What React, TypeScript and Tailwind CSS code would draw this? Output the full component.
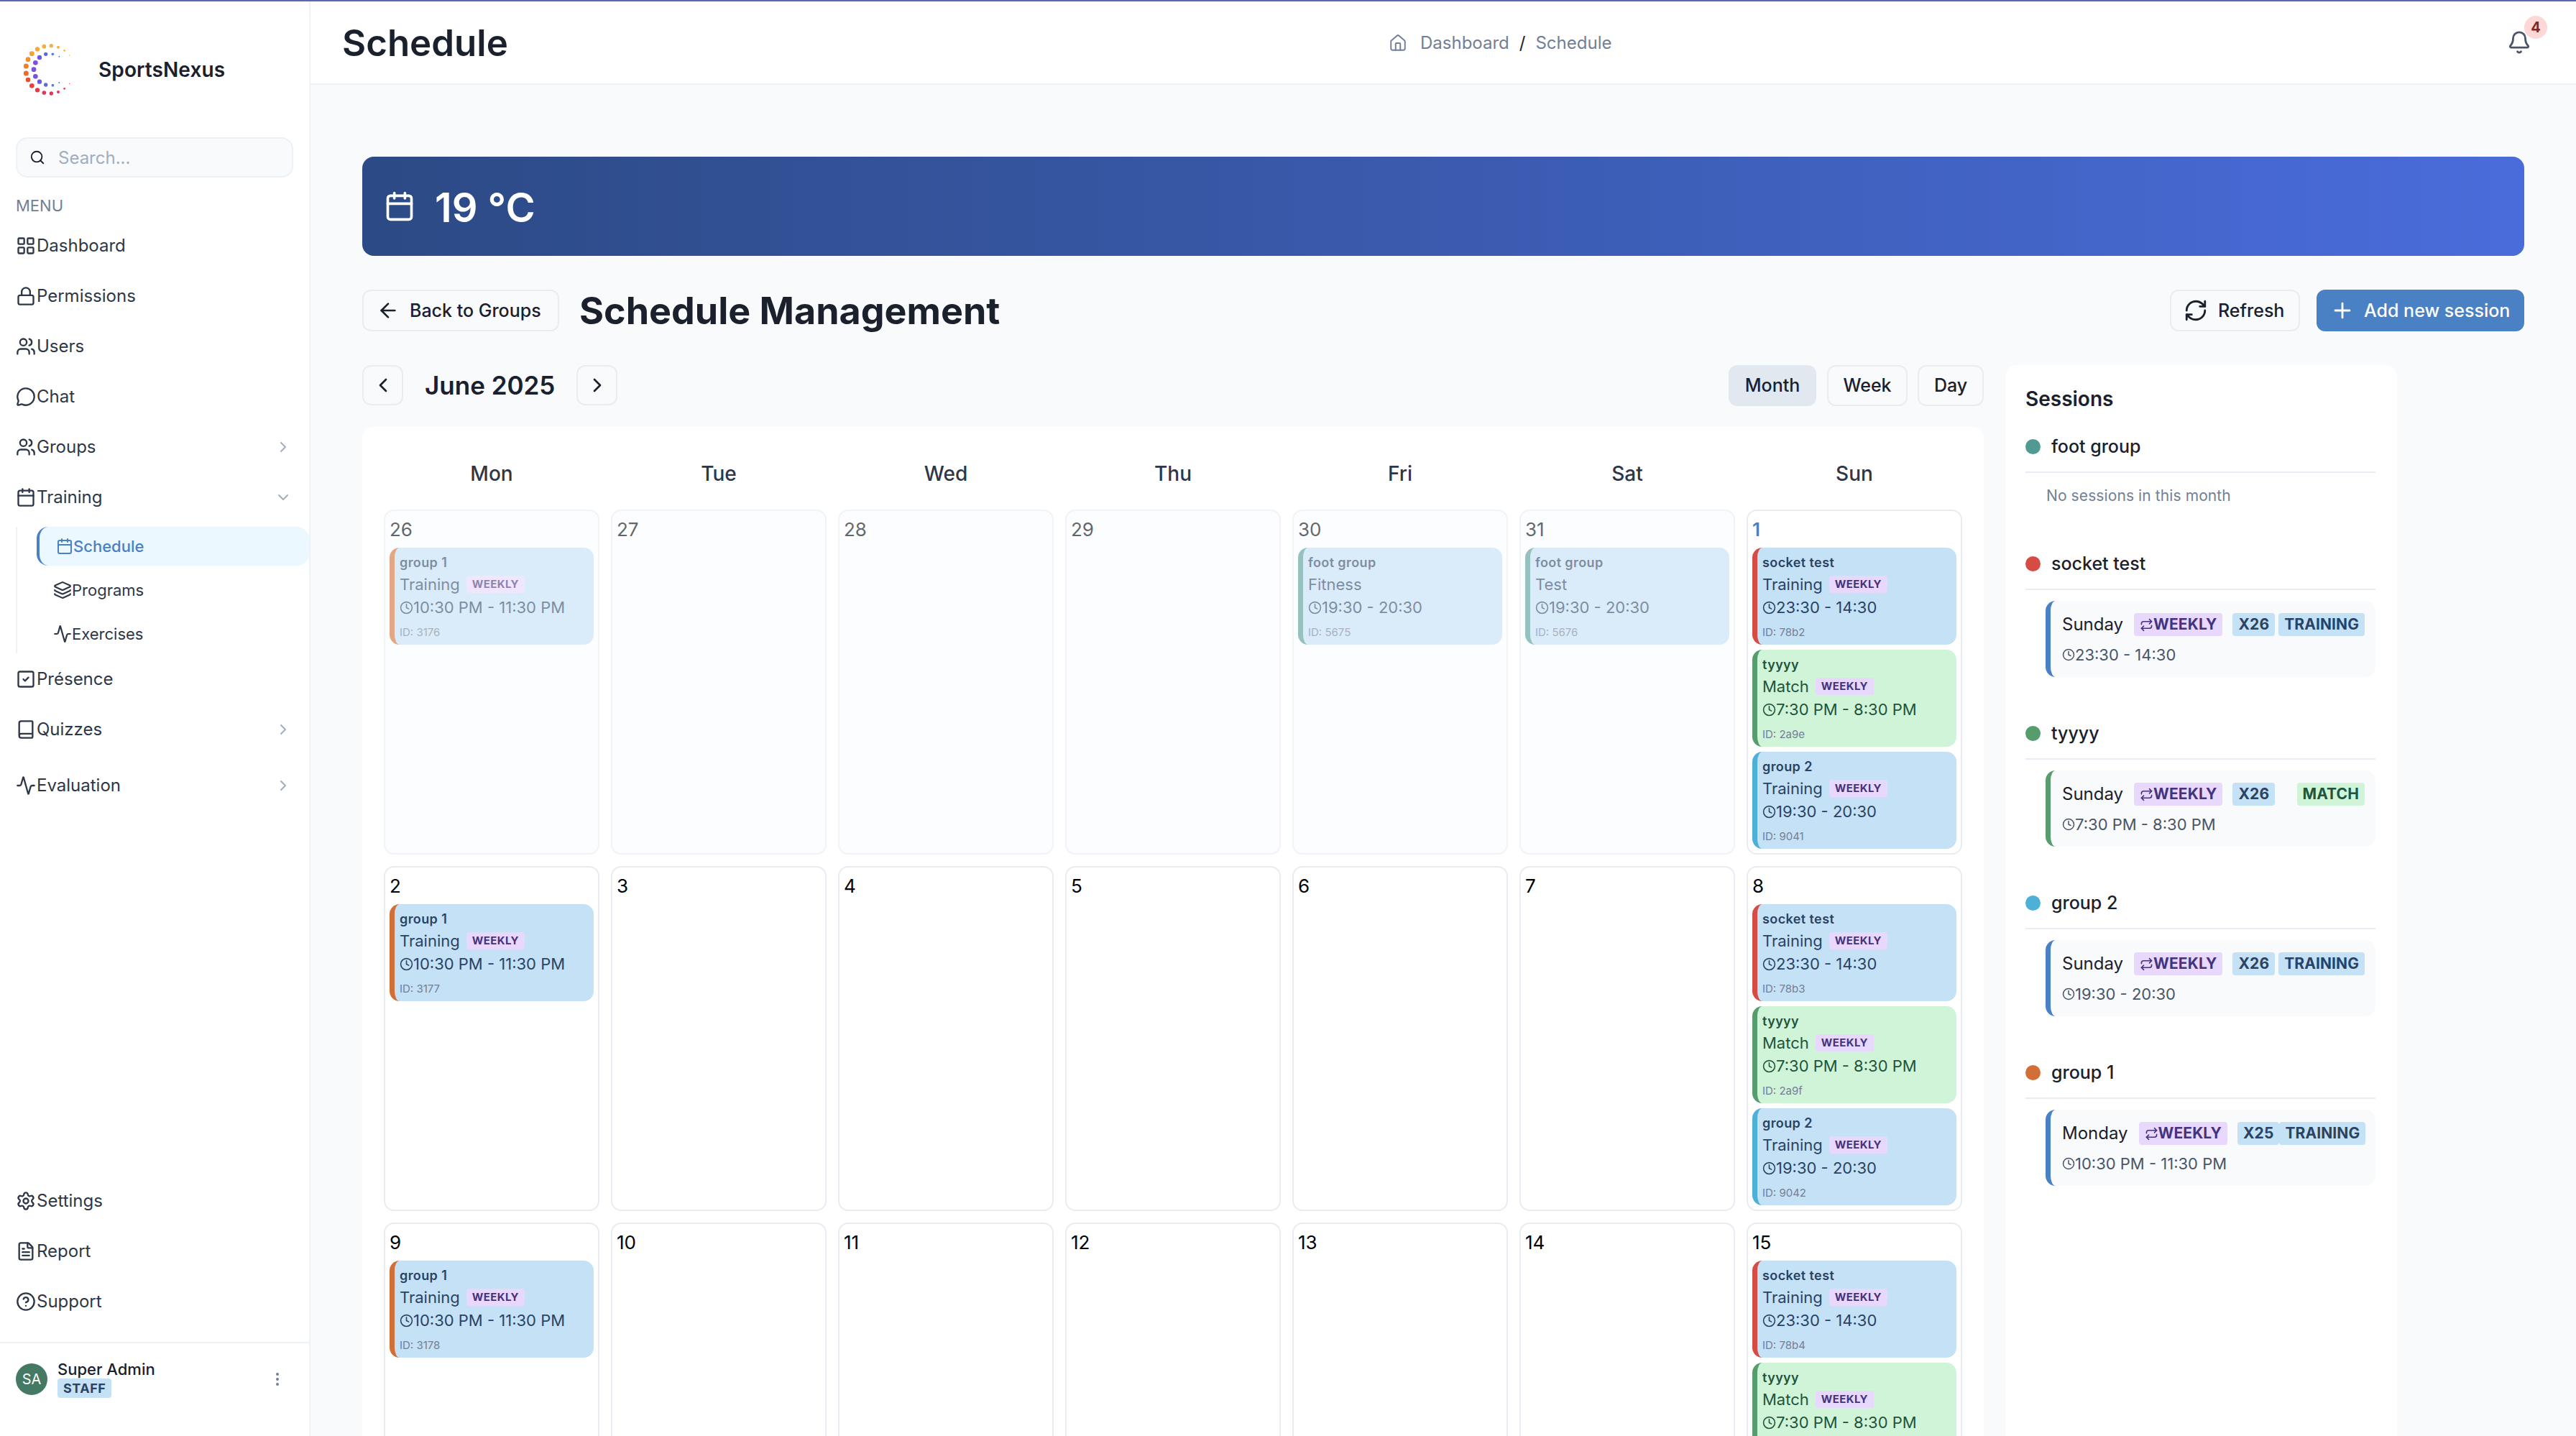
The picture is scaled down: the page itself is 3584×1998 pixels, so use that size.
import React from "react";
import {
  LayoutGrid, Lock, Users, MessageCircle, ChevronRight, ChevronDown, ChevronLeft, Calendar, Layers, Activity,
  SquareCheck, Book, Settings, FileText, CircleHelp, Search, MoreVertical, Home, Bell, ArrowLeft, RefreshCw, Plus, Clock, Repeat,
} from "lucide-react";

const outer: [number, number, number, string][] = [
  [287, 212, 2, "#f6b13a"], [266, 192, 4, "#f6b13a"], [240, 178, 6, "#f6b13a"], [211, 172, 8, "#f6b13a"], [181, 175, 8.5, "#f6ae3a"],
  [153, 186, 9.5, "#f5a838"], [130, 205, 10, "#f3a035"], [114, 229, 10, "#f19031"], [106, 257, 10.5, "#ee7f2d"], [106, 287, 10.5, "#ec6a2c"],
  [114, 314, 10, "#ea502f"], [130, 339, 10, "#e94237"], [153, 357, 9.5, "#e83a45"], [181, 368, 8.5, "#e8345a"], [211, 371, 8, "#e8315a"],
  [240, 365, 6, "#e8315a"], [266, 351, 4, "#e8315a"], [287, 330, 2, "#e8315a"],
];
const inner: [number, number, number, string][] = [
  [244, 217, 3, "#4a7fe8"], [217, 207, 5.5, "#4f7aea"], [188, 207, 8, "#5a68e6"], [162, 221, 9.5, "#6a58e4"], [145, 243, 10, "#7a4fe2"],
  [138, 271, 10, "#7c4fe0"], [145, 300, 10, "#7a4fe2"], [162, 322, 9.5, "#6a58e4"], [188, 335, 8, "#5a68e6"], [217, 337, 5.5, "#4f7aea"], [244, 326, 3, "#4a7fe8"],
];

function Logo() {
  return (
    <svg width="100" height="100" viewBox="0 0 300 300" className="shrink-0">
      {[...outer, ...inner].map(([x, y, r, c], i) => (
        <circle key={i} cx={x - 45} cy={y - 122} r={r} fill={c} />
      ))}
    </svg>
  );
}

function NavItem({ icon: Icon, label, chevron }: { icon: any; label: string; chevron?: "r" | "d" }) {
  return (
    <div className="flex h-[40px] items-center pl-[22px] pr-[24px] text-[24px] text-[#2d3748]">
      <Icon size={28} strokeWidth={2} className="shrink-0" />
      <span className="ml-[1px]">{label}</span>
      {chevron === "r" && <ChevronRight size={24} className="ml-auto text-[#a0aec0]" />}
      {chevron === "d" && <ChevronDown size={24} className="ml-auto text-[#a0aec0]" />}
    </div>
  );
}

function Sidebar() {
  return (
    <aside className="flex h-full w-[432px] shrink-0 flex-col border-r-2 border-[#edf2f7] bg-white">
      <div className="flex h-[135px] items-center pl-[16px] pt-[55px]">
        <Logo />
        <span className="ml-[21px] text-[28px] font-semibold tracking-[0.1px] text-[#1a202c]">SportsNexus</span>
      </div>
      <div className="mx-[22px] mt-[54px] flex h-[56px] items-center rounded-[16px] border-2 border-[#edf2f7] bg-[#f8fafc] pl-[17px]">
        <Search size={22} strokeWidth={2} className="text-[#1a202c]" />
        <span className="ml-[18px] pt-[2px] text-[24px] text-[#a0aec0]">Search...</span>
      </div>
      <div className="ml-[22px] mt-[24px] text-[22px] leading-[30px] text-[#718096]">MENU</div>
      <div className="mt-[21px] flex flex-col">
        <div className="flex flex-col gap-[30px]">
          <NavItem icon={LayoutGrid} label="Dashboard" />
          <NavItem icon={Lock} label="Permissions" />
          <NavItem icon={Users} label="Users" />
          <NavItem icon={MessageCircle} label="Chat" />
          <NavItem icon={Users} label="Groups" chevron="r" />
          <NavItem icon={Calendar} label="Training" chevron="d" />
        </div>
        <div className="ml-[22px] mt-[21px] flex flex-col border-l-2 border-[#edf2f7] pl-[27px]">
          <div className="flex h-[54px] items-center rounded-[16px] border-l-4 border-[#4a80c4] bg-[#ebf8ff] pl-[23px] text-[22px] font-medium text-[#4a80c4]">
            <Calendar size={24} className="shrink-0" />
            <span>Schedule</span>
          </div>
          <div className="mt-[7px] flex h-[54px] items-center pl-[23px] text-[22px] text-[#2d3748]">
            <Layers size={26} className="shrink-0" />
            <span>Programs</span>
          </div>
          <div className="mt-[7px] flex h-[54px] items-center pl-[23px] text-[22px] text-[#2d3748]">
            <Activity size={26} className="shrink-0" />
            <span>Exercises</span>
          </div>
        </div>
        <div className="mt-[16px] flex flex-col">
          <NavItem icon={SquareCheck} label="Présence" />
          <div className="mt-[30px]"><NavItem icon={Book} label="Quizzes" chevron="r" /></div>
          <div className="mt-[38px]"><NavItem icon={Activity} label="Evaluation" chevron="r" /></div>
        </div>
      </div>
      <div className="mt-auto flex flex-col gap-[30px] pb-[36px]">
        <NavItem icon={Settings} label="Settings" />
        <NavItem icon={FileText} label="Report" />
        <NavItem icon={CircleHelp} label="Support" />
      </div>
      <div className="flex h-[131px] items-center border-t-2 border-[#edf2f7] pb-[30px] pl-[22px] pr-[32px]">
        <div className="flex h-[44px] w-[44px] items-center justify-center rounded-full bg-[#447a64] text-[20px] text-white">SA</div>
        <div className="ml-[14px] flex flex-col items-start">
          <span className="text-[22px] font-medium leading-[26px] text-[#1a202c]">Super Admin</span>
          <span className="rounded-[4px] bg-[#c5e1f6] px-[8px] text-[18px] font-bold leading-[27px] tracking-[0.5px] text-[#2a4365]">STAFF</span>
        </div>
        <MoreVertical size={24} className="ml-auto text-[#718096]" />
      </div>
    </aside>
  );
}

function Header() {
  return (
    <header className="relative flex h-[116px] shrink-0 items-center border-b-2 border-[#edf2f7] bg-white pl-[44px]">
      <h1 className="w-[1456px] pt-[2px] text-[51px] font-semibold text-[#1a202c]">Schedule</h1>
      <div className="flex items-center pt-[2px] text-[24px] text-[#718096]">
        <Home size={26} strokeWidth={1.8} />
        <span className="ml-[18px]">Dashboard</span>
        <span className="mx-[14px] text-[#1a202c]">/</span>
        <span>Schedule</span>
      </div>
      <div className="absolute left-[3056px] top-[40px]">
        <Bell size={34} strokeWidth={2} className="text-[#4a5568]" />
        <span className="absolute left-[24px] top-[-20px] flex h-[32px] w-[32px] items-center justify-center rounded-full bg-[#fed7d7] text-[20px] font-bold text-[#822727]">4</span>
      </div>
    </header>
  );
}

type Ev = { g: string; t: string; time: string; id: string; c: string; match?: boolean; noBadge?: boolean };

function Event({ e }: { e: Ev }) {
  const fg = e.match ? "text-[#22543d]" : "text-[#2a4365]";
  const bg = e.match ? "bg-[#cff4d8]" : "bg-[#c5e1f6]";
  return (
    <div className={`flex h-[135px] flex-col rounded-[14px] border-l-[7px] pl-[7px] ${bg} ${fg} ${e.c}`}>
      <div className="mt-[9px] text-[18px] font-semibold leading-[24px] tracking-[0.4px]">{e.g}</div>
      <div className="mt-[6px] flex h-[24px] items-center text-[22px]">
        <span>{e.t}</span>
        {!e.noBadge && (
          <span className="ml-[9px] rounded-[4px] bg-[#e9d8fd] px-[8px] text-[15px] font-bold leading-[24px] tracking-[0.4px] text-[#44337a]">WEEKLY</span>
        )}
      </div>
      <div className="mt-[4px] flex h-[32px] items-center text-[22px]">
        <Clock size={19} strokeWidth={2} className="shrink-0" />
        <span>{e.time}</span>
      </div>
      <div className="mt-[7px] text-[15px] leading-[24px] text-[#718096]">ID: {e.id}</div>
    </div>
  );
}

function Cell({ d, muted, today, events = [] }: { d: number; muted?: boolean; today?: boolean; events?: Ev[] }) {
  return (
    <div className={`h-[480px] overflow-hidden rounded-[14px] border-2 ${muted ? "border-[#f0f3f7] bg-[#fcfdfe]" : "border-[#e9edf3] bg-white"}`}>
      <div className={muted ? "opacity-60" : ""}>
        <div className={`pl-[6px] pt-[10px] text-[26px] leading-[32px] ${today ? "font-semibold text-[#4a80c4]" : "text-black"}`}>{d}</div>
        <div className="mt-[9px] flex flex-col gap-[7px] px-[6px]">
          {events.map((e) => <Event key={e.id} e={e} />)}
        </div>
      </div>
    </div>
  );
}

const g1 = (id: string, c = "border-[#d26f36]"): Ev => ({ g: "group 1", t: "Training", time: "10:30 PM - 11:30 PM", id, c });
const sock = (id: string): Ev => ({ g: "socket test", t: "Training", time: "23:30 - 14:30", id, c: "border-[#d64c45]" });
const ty = (id: string): Ev => ({ g: "tyyyy", t: "Match", time: "7:30 PM - 8:30 PM", id, c: "border-[#569c6c]", match: true });
const g2 = (id: string): Ev => ({ g: "group 2", t: "Training", time: "19:30 - 20:30", id, c: "border-[#4db0d6]" });
const foot = (t: string, id: string): Ev => ({ g: "foot group", t, time: "19:30 - 20:30", id, c: "border-[#519a94]", noBadge: true });

function Tag({ cls, children }: { cls: string; children: React.ReactNode }) {
  return <span className={`flex h-[32px] items-center rounded-[4px] px-[8px] text-[21px] font-bold tracking-[0.1px] ${cls}`}>{children}</span>;
}

function SessionGroup({ name, dot, children }: { name: string; dot: string; children?: React.ReactNode }) {
  return (
    <div>
      <div className="flex h-[53px] items-start gap-[15px] border-b-2 border-[#e9edf3]">
        <span className={`mt-[6px] h-[21px] w-[21px] rounded-full ${dot}`} />
        <span className="text-[25px] font-medium leading-[32px] text-[#1a202c]">{name}</span>
      </div>
      {children}
    </div>
  );
}

function SessionCard({ day, x, type, time, c, match }: { day: string; x: string; type: string; time: string; c: string; match?: boolean }) {
  return (
    <div className={`ml-[28px] mt-[15px] flex h-[106px] flex-col rounded-[14px] border-l-[7px] bg-[#f8fafc] pl-[16px] pr-[15px] ${c}`}>
      <div className="mt-[17px] flex h-[32px] items-center">
        <span className="mr-[15px] text-[24px] text-[#1a202c]">{day}</span>
        <Tag cls="bg-[#e9d8fd] text-[#44337a]"><Repeat size={19} strokeWidth={2} />WEEKLY</Tag>
        <Tag cls="ml-[14px] bg-[#c5e1f6] text-[#2a4365]">{x}</Tag>
        <Tag cls={`ml-auto ${match ? "bg-[#cff4d8] text-[#22543d]" : "bg-[#c5e1f6] text-[#2a4365]"}`}>{type}</Tag>
      </div>
      <div className="mt-[10px] flex items-center text-[22px] leading-[32px] text-[#4a5568]">
        <Clock size={18} className="shrink-0" />
        <span>{time}</span>
      </div>
    </div>
  );
}

export default function App() {
  const days = ["Mon", "Tue", "Wed", "Thu", "Fri", "Sat", "Sun"];
  return (
    <div className="h-screen w-full overflow-hidden border-t-2 border-[#5b67b5] bg-white font-['Inter',sans-serif]">
      <div className="flex h-full">
        <Sidebar />
        <main className="flex h-full min-w-0 flex-1 flex-col overflow-hidden bg-[#f8fafc]">
          <Header />
          <div className="flex flex-col pl-[72px] pr-[72px] pt-[100px]">
            <div className="flex h-[138px] items-center rounded-[16px] bg-gradient-to-r from-[#2c4a85] to-[#4a6cdb] pl-[30px] text-white">
              <Calendar size={44} strokeWidth={2} />
              <span className="ml-[27px] mt-[3px] text-[56px] font-semibold">19 °C</span>
            </div>
            <div className="mt-[47px] flex h-[58px] items-center">
              <button className="flex h-[58px] w-[274px] items-center rounded-[12px] border-2 border-[#e9edf3] pl-[18px] text-[25px] font-medium text-[#1a202c]">
                <ArrowLeft size={32} />
                <span className="ml-[14px] pt-[2px]">Back to Groups</span>
              </button>
              <h2 className="ml-[28px] pt-[1px] text-[52px] font-bold text-[#1a202c]">Schedule Management</h2>
              <button className="ml-auto flex h-[58px] w-[181px] items-center rounded-[12px] border-2 border-[#e9edf3] pl-[17px] text-[25px] font-medium text-[#1a202c]">
                <RefreshCw size={34} strokeWidth={2} />
                <span className="ml-[14px] pt-[2px]">Refresh</span>
              </button>
              <button className="ml-[23px] flex h-[58px] w-[289px] items-center rounded-[12px] bg-[#4a80c4] pl-[19px] text-[25px] font-medium text-white">
                <Plus size={34} strokeWidth={2} />
                <span className="ml-[13px] pt-[2px]">Add new session</span>
              </button>
            </div>
            <div className="mt-[47px] flex items-start gap-[30px]">
              <div className="w-[2256px] shrink-0">
                <div className="flex h-[56px] items-center">
                  <button className="flex h-[56px] w-[57px] items-center justify-center rounded-[12px] border-2 border-[#e9edf3] text-[#1a202c]"><ChevronLeft size={32} /></button>
                  <span className="mx-[30px] pt-[1px] text-[35px] font-semibold text-[#1a202c]">June 2025</span>
                  <button className="flex h-[56px] w-[57px] items-center justify-center rounded-[12px] border-2 border-[#e9edf3] text-[#1a202c]"><ChevronRight size={32} /></button>
                  <button className="ml-auto h-[57px] w-[122px] rounded-[12px] bg-[#e2e8f0] pt-[1px] text-[25px] font-medium text-[#1a202c]">Month</button>
                  <button className="ml-[15px] h-[57px] w-[112px] rounded-[12px] border-2 border-[#e9edf3] pt-[1px] text-[25px] font-medium text-[#1a202c]">Week</button>
                  <button className="ml-[14px] h-[57px] w-[92px] rounded-[12px] border-2 border-[#e9edf3] pt-[1px] text-[25px] font-medium text-[#1a202c]">Day</button>
                </div>
                <div className="mt-[30px] rounded-[16px] bg-white px-[30px]">
                  <div className="grid h-[115px] grid-cols-7 items-center gap-x-[16px] pt-[14px]">
                    {days.map((d) => <div key={d} className="text-center text-[28px] font-medium text-[#2d3748]">{d}</div>)}
                  </div>
                  <div className="grid grid-cols-7 gap-[16px]">
                    <Cell d={26} muted events={[g1("3176")]} />
                    <Cell d={27} muted />
                    <Cell d={28} muted />
                    <Cell d={29} muted />
                    <Cell d={30} muted events={[foot("Fitness", "5675")]} />
                    <Cell d={31} muted events={[foot("Test", "5676")]} />
                    <Cell d={1} today events={[sock("78b2"), ty("2a9e"), g2("9041")]} />
                    <Cell d={2} events={[g1("3177")]} />
                    <Cell d={3} />
                    <Cell d={4} />
                    <Cell d={5} />
                    <Cell d={6} />
                    <Cell d={7} />
                    <Cell d={8} events={[sock("78b3"), ty("2a9f"), g2("9042")]} />
                    <Cell d={9} events={[g1("3178")]} />
                    <Cell d={10} />
                    <Cell d={11} />
                    <Cell d={12} />
                    <Cell d={13} />
                    <Cell d={14} />
                    <Cell d={15} events={[sock("78b4"), ty("2a9g")]} />
                  </div>
                </div>
              </div>
              <div className="h-[1600px] w-[545px] shrink-0 rounded-[16px] bg-white pl-[28px] pr-[30px] pt-[30px]">
                <h3 className="text-[28px] font-semibold leading-[34px] text-[#1a202c]">Sessions</h3>
                <div className="mt-[33px]">
                  <SessionGroup name="foot group" dot="bg-[#519a94]">
                    <div className="ml-[29px] mt-[17px] text-[21px] leading-[30px] tracking-[0.1px] text-[#718096]">No sessions in this month</div>
                  </SessionGroup>
                </div>
                <div className="mt-[63px]">
                  <SessionGroup name="socket test" dot="bg-[#d64c45]">
                    <SessionCard day="Sunday" x="X26" type="TRAINING" time="23:30 - 14:30" c="border-[#4a80c4]" />
                  </SessionGroup>
                </div>
                <div className="mt-[62px]">
                  <SessionGroup name="tyyyy" dot="bg-[#569c6c]">
                    <SessionCard day="Sunday" x="X26" type="MATCH" time="7:30 PM - 8:30 PM" c="border-[#569c6c]" match />
                  </SessionGroup>
                </div>
                <div className="mt-[62px]">
                  <SessionGroup name="group 2" dot="bg-[#4db0d6]">
                    <SessionCard day="Sunday" x="X26" type="TRAINING" time="19:30 - 20:30" c="border-[#4a80c4]" />
                  </SessionGroup>
                </div>
                <div className="mt-[62px]">
                  <SessionGroup name="group 1" dot="bg-[#d26f36]">
                    <SessionCard day="Monday" x="X25" type="TRAINING" time="10:30 PM - 11:30 PM" c="border-[#4a80c4]" />
                  </SessionGroup>
                </div>
              </div>
            </div>
          </div>
        </main>
      </div>
    </div>
  );
}
